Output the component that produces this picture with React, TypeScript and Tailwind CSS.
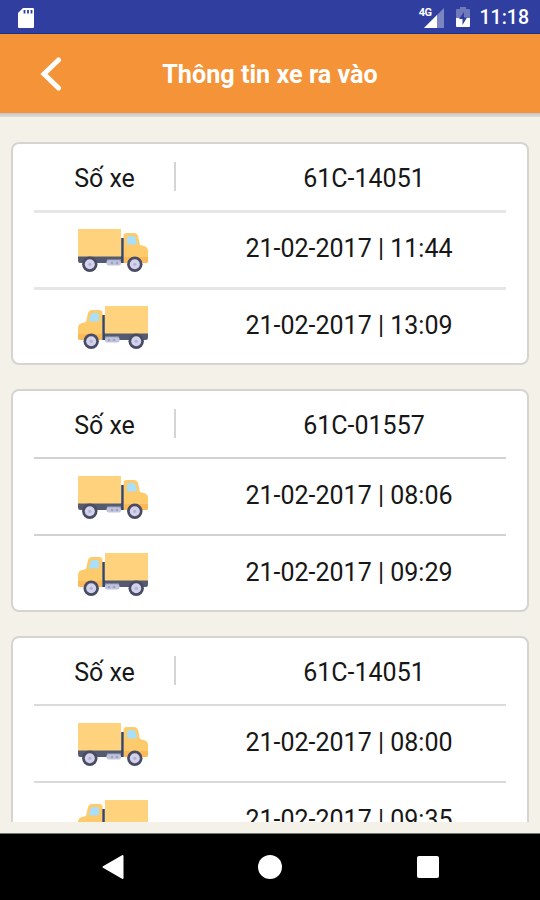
type Visit = { plate: string; entered: string; left: string; line: string };

const visits: Visit[] = [
  { plate: '61C-14051', entered: '21-02-2017 | 11:44', left: '21-02-2017 | 13:09', line: 'mr-px h-[3px] bg-[#e6e6e6]' },
  { plate: '61C-01557', entered: '21-02-2017 | 08:06', left: '21-02-2017 | 09:29', line: 'mr-px mb-px h-[2px] bg-[#d2d2d2]' },
  { plate: '61C-14051', entered: '21-02-2017 | 08:00', left: '21-02-2017 | 09:35', line: 'mr-px mb-px h-[2px] bg-[#dadada]' },
];

function Truck({ flipped = false }: { flipped?: boolean }) {
  return (
    <svg viewBox="0 0 72 44" className={`h-[44px] w-[72px] ${flipped ? '-scale-x-100' : ''}`}>
      <path d="M1 27H46V34H3Q1 34 1 31Z" fill="#545b70" />
      <path d="M46.500 7Q46.500 4 50 4H57Q60 4 61 7L63 16L67 17Q71 18 71 22V32Q71 34 69 34H46.500Z" fill="#fdcb6c" />
      <path d="M47 28H71V32Q71 34 69 34H47Z" fill="#fbb95a" />
      <path d="M50 9Q50 7 52 7H56.500Q58 7 58.500 9L60 14Q60 15.500 58 15.500H52Q50 15.500 50 13.500Z" fill="#a9dff8" />
      <rect x="1" y="0" width="43" height="27.500" fill="#ffd37d" />
      <rect x="44.200" y="9" width="2.500" height="25" fill="#394663" />
      <rect x="29.500" y="31" width="14.500" height="5.500" rx="2" fill="#c0c4dc" />
      <path d="M30 31H44" stroke="#a3a9c6" strokeWidth="1" />
      <circle cx="35" cy="34" r="1.300" fill="#9da2c4" />
      <circle cx="40" cy="34" r="1.300" fill="#9da2c4" />
      {[12.8, 57.8].map((x) => (
        <g key={x}>
          <circle cx={x} cy="35.300" r="7.700" fill="#484b62" />
          <circle cx={x} cy="35.300" r="5" fill="#d3d2ec" />
          <circle cx={x} cy="35.300" r="1.600" fill="#b3b4d2" />
        </g>
      ))}
    </svg>
  );
}

function VisitRow({ time, flipped }: { time: string; flipped?: boolean }) {
  return (
    <div className="flex h-[74px] items-center">
      <div className="flex w-[141px] justify-center pl-[16px] pt-px">
        <Truck flipped={flipped} />
      </div>
      <div className="flex-1 pb-[3px] pl-[16px] text-center">{time}</div>
    </div>
  );
}

function VisitCard({ plate, entered, left, line }: Visit) {
  return (
    <section className="h-[223px] shrink-0 rounded-[8px] border-2 border-[#d5d4d1] bg-white pr-[20px] pl-[21px] text-[25px] leading-[30px] text-[#171717]">
      <div className="flex h-[66px] items-center">
        <div className="w-[142px] pt-[3px] pr-px text-center">Số xe</div>
        <div className="-ml-[2px] mb-[2px] h-[29px] w-[2px] bg-[#d4d4d4]" />
        <div className="flex-1 pt-[3px] pl-[45px] text-center">{plate}</div>
      </div>
      <div className={line} />
      <VisitRow time={entered} />
      <div className={line} />
      <VisitRow time={left} flipped />
    </section>
  );
}

export default function App() {
  return (
    <div className="flex h-[900px] w-[540px] flex-col overflow-hidden bg-[#f4f1e8] font-['Roboto','Noto_Sans',sans-serif]">
      <div className="flex h-[34px] shrink-0 items-center justify-between border-b border-[#203080] bg-[#303f9f] pr-[11px] pl-[17px] text-white">
        <svg viewBox="0 0 18 22" className="mt-[2px] h-[22px] w-[18px]">
          <path d="M6 1H16Q17 1 17 2V20Q17 21 16 21H2Q1 21 1 20V6Z" fill="#fff" />
          <path d="M7.500 3V6.500M11 3V6.500M14.500 3V6.500" stroke="#303f9f" strokeWidth="1.800" />
        </svg>
        <div className="flex items-center">
          <div className="flex h-[22px] items-end">
            <span className="self-start text-[11px] leading-[13px] font-bold tracking-[-0.5px]">4G</span>
            <svg viewBox="0 0 21 20" className="-ml-[8px] h-[20px] w-[21px]">
              <path d="M0 20L20 0V20Z" fill="#7b85c2" />
              <path d="M0 20L13 7V20Z" fill="#fff" />
            </svg>
          </div>
          <svg viewBox="0 0 14 20" className="mt-px ml-[11px] h-[20px] w-[14px]">
            <path d="M4 0H10V2H13Q14 2 14 3V19Q14 20 13 20H1Q0 20 0 19V3Q0 2 1 2H4Z" fill="#6f7abb" />
            <path d="M0 11H14V19Q14 20 13 20H1Q0 20 0 19Z" fill="#fff" />
            <path d="M8 5L3 12H6.500V18L11 10.500H8Z" fill="#303f9f" />
          </svg>
          <span className="ml-[10px] pt-[2px] text-[19.500px] leading-[24px] font-medium">11:18</span>
        </div>
      </div>
      <header className="grid h-[79px] shrink-0 grid-cols-[102px_1fr_102px] items-center bg-[#f59338] text-white">
        <svg viewBox="0 0 22 36" className="ml-[40px] h-[36px] w-[22px]">
          <path d="M18.500 4L4 18L18.500 32" fill="none" stroke="#fff" strokeWidth="5" strokeLinecap="round" />
        </svg>
        <h1 className="pt-[3px] text-center text-[25.200px] leading-[30px] font-bold">Thông tin xe ra vào</h1>
      </header>
      <div className="h-[4px] shrink-0 bg-linear-to-b from-[#c6c4c4] to-[#dedddb]" />
      <main className="mt-[25px] flex h-[680px] shrink-0 flex-col gap-[24px] overflow-hidden px-[11px]">
        {visits.map((visit) => (
          <VisitCard key={visit.entered} {...visit} />
        ))}
      </main>
      <div className="h-[11px] shrink-0" />
      <nav className="flex flex-1 items-center justify-between border-t border-[#777] bg-black px-[101px]">
        <svg viewBox="0 0 24 26" className="h-[26px] w-[24px]">
          <path d="M21.500 2V24L2.500 13Z" fill="#fff" stroke="#fff" strokeWidth="2" strokeLinejoin="round" />
        </svg>
        <span className="-ml-[2px] size-[24px] rounded-full bg-white" />
        <span className="size-[22px] rounded-[2px] bg-white" />
      </nav>
    </div>
  );
}
